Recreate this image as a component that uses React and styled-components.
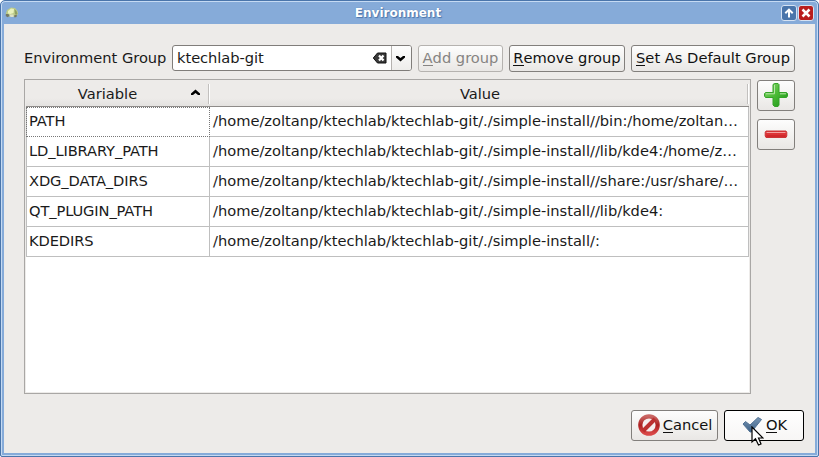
import React from "react";
import styled, { createGlobalStyle, css } from "styled-components";

const Global = createGlobalStyle`
  *, *::before, *::after { box-sizing: border-box; }
  body { margin: 0; background: #fff; overflow: hidden; }
`;

const Window = styled.div`
  width: 819px;
  height: 457px;
  display: flex;
  flex-direction: column;
  border: 1px solid #4a75ab;
  border-radius: 5px 5px 2px 2px;
  background: #86abd9;
  box-shadow: inset 0 0 0 1px #c5daf3;
  padding: 1px 3px 3px;
  font-family: "DejaVu Sans", sans-serif;
  font-size: 14.67px;
  line-height: 18px;
  color: #1a1a1a;
`;

const TitleBar = styled.header`
  height: 22px;
  flex: none;
  display: grid;
  grid-template-columns: 36px 1fr 36px;
  align-items: center;
`;

const AppIcon = styled.svg`
  width: 14px;
  height: 14px;
  margin-left: 1px;
`;

const Title = styled.h1`
  margin: 0;
  padding-right: 23px;
  text-align: center;
  font-size: 12px;
  line-height: 20px;
  font-weight: bold;
  color: #fff;
  text-shadow: 1px 1px 1px #4a75ab, 0 0 1px #4a75ab;
`;

const TitleButtons = styled.div`
  display: flex;
  justify-content: flex-end;
  gap: 1px;
  padding-right: 1px;
`;

const TitleButton = styled.button`
  width: 16px;
  height: 16px;
  padding: 0;
  display: grid;
  place-items: center;
  border: 1px solid #d5e2f3;
  border-radius: 3px;
  background: ${(p) => (p.$danger ? "#b91d1d" : "#4a75ab")};
`;

const Content = styled.main`
  flex: 1;
  min-height: 0;
  background: #edebe9;
  display: flex;
  flex-direction: column;
  padding: 21px 11px 12px 20px;
`;

const GroupBar = styled.div`
  height: 27px;
  display: flex;
  gap: 6px;
  margin-bottom: 7px;
`;

const GroupLabel = styled.label`
  width: 142px;
  line-height: 26px;
  letter-spacing: -0.03px;
  white-space: nowrap;
`;

const Combo = styled.div`
  width: 240px;
  height: 26px;
  display: flex;
  align-items: center;
  border: 1px solid #807d7a;
  border-radius: 3px;
  background: #fff;
  overflow: hidden;
`;

const ComboText = styled.span`
  flex: 1;
  padding-left: 4px;
  letter-spacing: -0.05px;
`;

const ComboArrow = styled.span`
  width: 20px;
  height: 24px;
  margin-left: 4px;
  padding-right: 2px;
  border-left: 1px solid #b5b2af;
  background: linear-gradient(#fdfdfd, #eeedeb);
  display: grid;
  place-items: center;
`;

const Button = styled.button`
  width: ${(p) => p.$width}px;
  height: ${(p) => p.$height || 27}px;
  flex: none;
  padding: 0 0 2px ${(p) => p.$shift || 0}px;
  display: flex;
  align-items: center;
  justify-content: center;
  gap: 3px;
  font: inherit;
  white-space: nowrap;
  color: #111;
  border: 1px solid #827f7c;
  border-radius: 3px;
  background: linear-gradient(#fdfdfd, #f1f0ee 60%, #e9e7e5);
  ${(p) => p.$primary && css`
    border-color: #000;
    background: linear-gradient(#fff, #f7f6f5);
  `}
  &:disabled {
    color: #868482;
    border-color: #b5b2af;
  }
`;

const Mnemonic = styled.span`
  display: inline-block;
  height: 17px;
  border-bottom: 1px solid currentColor;
`;

const Body = styled.div`
  height: 315px;
  display: flex;
  gap: 6px;
`;

const TableFrame = styled.div`
  width: 727px;
  border: 1px solid #a9a7a5;
  background: #fff;
  box-shadow: inset 0 0 0 1px #edebe9;
  padding: 0 1px;
`;

const Grid = styled.div`
  display: grid;
  grid-template-columns: 184px 539px;
`;

const HeaderCell = styled.div`
  position: relative;
  height: 27px;
  padding-left: ${(p) => (p.$pad ? 0 : 1)}px;
  padding-right: ${(p) => p.$pad || 0}px;
  line-height: 28px;
  text-align: center;
  border-bottom: 1px solid #8e8b89;
  background: linear-gradient(#edebe9 70%, #e4e2e0);
  &::after {
    content: "";
    position: absolute;
    right: 0;
    top: 4px;
    width: 2px;
    height: 20px;
    background: linear-gradient(90deg, #c2c0be 50%, #fff 50%);
  }
`;

const SortArrow = styled.svg`
  position: absolute;
  right: 10px;
  top: 9px;
  width: 9px;
  height: 7px;
`;

const Cell = styled.div`
  height: 30px;
  line-height: 28px;
  padding-left: 3px;
  letter-spacing: -0.015px;
  white-space: nowrap;
  overflow: hidden;
  border-right: 1px solid #bfbfbf;
  border-bottom: 1px solid #bfbfbf;
  ${(p) => p.$first && css`
    border-left: 1px solid #bfbfbf;
    padding-left: 2px;
    letter-spacing: -0.12px;
  `}
  ${(p) => p.$focused && css`
    border-right-color: #fff;
    border-bottom-color: #fff;
    outline: 1px dotted #777;
    outline-offset: -1px;
  `}
`;

const Tools = styled.div`
  display: flex;
  flex-direction: column;
  padding-top: 1px;
  gap: 8px;
`;

const Actions = styled.footer`
  display: flex;
  justify-content: flex-end;
  gap: 6px;
  margin-top: 16px;
`;

const OkIcon = styled.span`
  position: relative;
  width: 21px;
  height: 22px;
`;

const Pointer = styled.svg`
  position: absolute;
  left: 9px;
  top: 12px;
  width: 13px;
  height: 20px;
`;

const rows = [
  ["PATH", "/home/zoltanp/ktechlab/ktechlab-git/./simple-install//bin:/home/zoltan…"],
  ["LD_LIBRARY_PATH", "/home/zoltanp/ktechlab/ktechlab-git/./simple-install//lib/kde4:/home/z…"],
  ["XDG_DATA_DIRS", "/home/zoltanp/ktechlab/ktechlab-git/./simple-install//share:/usr/share/…"],
  ["QT_PLUGIN_PATH", "/home/zoltanp/ktechlab/ktechlab-git/./simple-install//lib/kde4:"],
  ["KDEDIRS", "/home/zoltanp/ktechlab/ktechlab-git/./simple-install/:"],
];

const Label = ({ text }) => (
  <span><Mnemonic>{text[0]}</Mnemonic>{text.slice(1)}</span>
);

export default function App() {
  return (
    <>
      <Global />
      <Window>
        <TitleBar>
          <AppIcon viewBox="0 0 14 14">
            <path d="M1 7 2 4 6 1.500l4 .5 2.500 3 .5 3-2 2.500H3L.8 9Z" fill="#bccb88" />
            <path d="M3 5l3-2.500 3 .5-.5 4-3 1-2.500-.5Z" fill="#eaf2bd" />
            <path d="M9.500 3l2 2 1 3-2.500.5Z" fill="#8d9f62" />
            <path d="M.8 8h2.700l1 2-2 1.200L.8 10ZM9 9.500l3-1-.5 2.500-2 .5Z" fill="#747966" />
            <path d="M4.500 8.500h4V11H5.500Z" fill="#dfe2c9" />
          </AppIcon>
          <Title>Environment</Title>
          <TitleButtons>
            <TitleButton aria-label="Shade">
              <svg width="10" height="10" viewBox="0 0 10 10">
                <path d="M5 9.500V2M1.300 5.300 5 1.600l3.700 3.700" fill="none" stroke="#fff" strokeWidth="2" />
              </svg>
            </TitleButton>
            <TitleButton $danger aria-label="Close">
              <svg width="10" height="10" viewBox="0 0 10 10">
                <path d="M1.500 1.500l7 7M8.500 1.500l-7 7" stroke="#fff" strokeWidth="2.500" />
              </svg>
            </TitleButton>
          </TitleButtons>
        </TitleBar>
        <Content>
          <GroupBar>
            <GroupLabel>Environment Group</GroupLabel>
            <Combo>
              <ComboText>ktechlab-git</ComboText>
              <svg width="15" height="12" viewBox="0 0 15 12">
                <path d="M1.300 6 5.500 1H14v10H5.500Z" fill="#3a3a3a" stroke="#111" />
                <path d="M7 3.500l4.500 5M11.500 3.500l-4.500 5" stroke="#fff" strokeWidth="2.200" />
              </svg>
              <ComboArrow>
                <svg width="9" height="7" viewBox="0 0 9 7">
                  <path d="M0 1h2l2.500 2L7 1h2v1.500L4.500 6.500 0 2.500Z" fill="#000" />
                </svg>
              </ComboArrow>
            </Combo>
            <Button $width={85} disabled><Label text="Add group" /></Button>
            <Button $width={116}><Label text="Remove group" /></Button>
            <Button $width={164}><Label text="Set As Default Group" /></Button>
          </GroupBar>
          <Body>
            <TableFrame>
              <Grid>
                <HeaderCell $pad={21}>
                  Variable
                  <SortArrow viewBox="0 0 9 7">
                    <path d="M0 6h2l2.500-2L7 6h2V4.500L4.500.5 0 4.500Z" fill="#000" />
                  </SortArrow>
                </HeaderCell>
                <HeaderCell>Value</HeaderCell>
                {rows.map(([name, value], i) => (
                  <React.Fragment key={name}>
                    <Cell $first $focused={i === 0}>{name}</Cell>
                    <Cell>{value}</Cell>
                  </React.Fragment>
                ))}
              </Grid>
            </TableFrame>
            <Tools>
              <Button $width={38} $height={31} aria-label="Add">
                <svg width="24" height="24" viewBox="0 0 24 24">
                  <defs>
                    <linearGradient id="plus" x1="0" y1="0" x2="1" y2="1">
                      <stop offset="0" stopColor="#8ad873" />
                      <stop offset=".5" stopColor="#49b934" />
                      <stop offset="1" stopColor="#179017" />
                    </linearGradient>
                  </defs>
                  <path d="M10.500.5h3.500l1 1V9.500h7.500l1 1v2.500l-1 1.500H15v7.500L14 23.500h-3.500L9 22v-7.500H1.500L.5 13v-2.500l1-1H9V1.500Z" fill="url(#plus)" stroke="#35a328" />
                  <path d="M10.500 2v8.800H2M16 10.800h6" fill="none" stroke="#b6e6a6" />
                </svg>
              </Button>
              <Button $width={38} $height={31} aria-label="Remove">
                <svg width="24" height="24" viewBox="0 0 24 24">
                  <path d="M2 9h20l.8 1.500V14L22 15.500H2L1.200 14v-3.500Z" fill="#dc3336" stroke="#cb3437" />
                  <path d="M2.500 10.500h19" stroke="#f3a0a0" />
                  <path d="M2.500 14h19" stroke="#c51e23" />
                </svg>
              </Button>
            </Tools>
          </Body>
          <Actions>
            <Button $width={87} $height={31} $shift={1}>
              <svg width="22" height="22" viewBox="0 0 22 22">
                <defs>
                  <linearGradient id="stop" x1="0" y1="0" x2="0" y2="1">
                    <stop offset="0" stopColor="#c96663" />
                    <stop offset=".5" stopColor="#ac2020" />
                    <stop offset="1" stopColor="#d94848" />
                  </linearGradient>
                </defs>
                <circle cx="11" cy="11" r="8.700" fill="#f4eeee" stroke="url(#stop)" strokeWidth="4.200" />
                <path d="M5 17 17 5" stroke="#bc3030" strokeWidth="4" />
              </svg>
              <Label text="Cancel" />
            </Button>
            <Button $width={80} $height={31} $shift={1} $primary>
              <OkIcon>
                <svg width="21" height="22" viewBox="0 0 21 22">
                  <defs>
                    <linearGradient id="check" x1="0" y1="0" x2="0" y2="1">
                      <stop offset="0" stopColor="#7896b5" />
                      <stop offset="1" stopColor="#3d6186" />
                    </linearGradient>
                  </defs>
                  <path d="M1 10 3.500 7.500 8 11l8-7.500L19.500 5.500 9.500 18H8Z" fill="url(#check)" stroke="#527395" strokeLinejoin="round" />
                </svg>
                <Pointer viewBox="0 0 13 20">
                  <path d="M1 1v15l3.500-3.200L7.500 19l2.500-1-2.500-6h4.500Z" fill="#fff" stroke="#000" strokeWidth="1.200" />
                </Pointer>
              </OkIcon>
              <Label text="OK" />
            </Button>
          </Actions>
        </Content>
      </Window>
    </>
  );
}
